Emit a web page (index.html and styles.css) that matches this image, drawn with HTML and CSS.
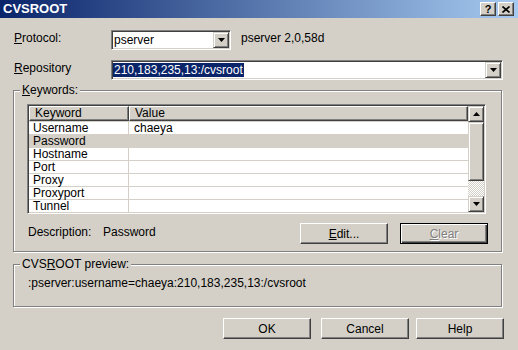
FILE: index.html
```html
<!DOCTYPE html>
<html lang="en">
<head>
  <meta charset="UTF-8">
  <title>CVSROOT</title>
  <link rel="stylesheet" href="styles.css">
</head>
<body>
  <div class="titlebar">
    <span class="title">CVSROOT</span>
    <div class="caption-btns">
      <span class="cap-btn cap-help">?</span>
      <span class="cap-btn">
        <svg width="8" height="7" viewBox="0 0 8 7"><path d="M0.5 0.5 L7.5 6.5 M7.5 0.5 L0.5 6.5" stroke="#000" stroke-width="1.6" fill="none"/></svg>
      </span>
    </div>
  </div>

  <div class="dialog">
    <div class="field-row">
      <span class="field-label"><u>P</u>rotocol:</span>
      <div class="combo combo-protocol">
        <span class="combo-text">pserver</span>
        <span class="drop-btn"><svg width="7" height="4" viewBox="0 0 7 4"><path d="M0 0 H7 L3.5 4 Z" fill="#000"/></svg></span>
      </div>
      <span class="version">pserver 2,0,58d</span>
    </div>

    <div class="field-row field-row-repo">
      <span class="field-label"><u>R</u>epository</span>
      <div class="combo combo-repo">
        <span class="combo-text"><span class="selected-text">210,183,235,13:/cvsroot</span></span>
        <span class="drop-btn"><svg width="7" height="4" viewBox="0 0 7 4"><path d="M0 0 H7 L3.5 4 Z" fill="#000"/></svg></span>
      </div>
    </div>

    <div class="group group-keywords">
      <div class="group-title"><u>K</u>eywords:</div>
      <div class="listview">
        <div class="list-main">
          <div class="list-header">
            <div class="hcell hcell-key">Keyword</div>
            <div class="hcell hcell-val">Value</div>
          </div>
          <div class="row"><div class="cell-key">Username</div><div class="cell-val">chaeya</div></div>
          <div class="row row-selected"><div class="cell-key">Password</div><div class="cell-val"></div></div>
          <div class="row"><div class="cell-key">Hostname</div><div class="cell-val"></div></div>
          <div class="row"><div class="cell-key">Port</div><div class="cell-val"></div></div>
          <div class="row"><div class="cell-key">Proxy</div><div class="cell-val"></div></div>
          <div class="row"><div class="cell-key">Proxyport</div><div class="cell-val"></div></div>
          <div class="row"><div class="cell-key">Tunnel</div><div class="cell-val"></div></div>
        </div>
        <div class="scrollbar">
          <span class="sb-btn"><svg width="7" height="4" viewBox="0 0 7 4"><path d="M0 4 H7 L3.5 0 Z" fill="#000"/></svg></span>
          <span class="sb-thumb"></span>
          <span class="sb-track"></span>
          <span class="sb-btn"><svg width="7" height="4" viewBox="0 0 7 4"><path d="M0 0 H7 L3.5 4 Z" fill="#000"/></svg></span>
        </div>
      </div>
      <div class="desc-row">
        <span class="desc-label">Description:</span>
        <span class="desc-value">Password</span>
        <button class="btn btn-edit"><u>E</u>dit...</button>
        <button class="btn btn-default btn-disabled"><u>C</u>lear</button>
      </div>
    </div>

    <div class="group group-preview">
      <div class="group-title">CVS<u>R</u>OOT preview:</div>
      <div class="preview-text">:pserver:username=chaeya:210,183,235,13:/cvsroot</div>
    </div>

    <div class="dialog-btns">
      <button class="btn">OK</button>
      <button class="btn btn-cancel">Cancel</button>
      <button class="btn btn-help">Help</button>
    </div>
  </div>
</body>
</html>
```

FILE: styles.css
```css
* {
  box-sizing: border-box;
}
body {
  margin: 0;
  width: 518px;
  height: 350px;
  overflow: hidden;
  background-color: #d4d0c8;
  font-family: "Liberation Sans", Arial, sans-serif;
  font-size: 12px;
  line-height: 14px;
  color: #000;
}
u {
  text-underline-offset: 1px;
}

/* title bar */
.titlebar {
  height: 18px;
  display: flex;
  align-items: center;
  justify-content: space-between;
  padding: 0 4px 0 3px;
  background: linear-gradient(to right, #0a246a, #a6caf0);
}
.title {
  color: #fff;
  font-weight: bold;
  font-size: 13px;
  line-height: 16px;
}
.caption-btns {
  display: flex;
  gap: 2px;
}
.cap-btn {
  width: 16px;
  height: 14px;
  display: flex;
  align-items: center;
  justify-content: center;
  background-color: #d4d0c8;
  border: 1px solid;
  border-color: #fff #404040 #404040 #fff;
  box-shadow: inset -1px -1px 0 #808080;
}
.cap-help {
  font-weight: bold;
  font-size: 11px;
  line-height: 12px;
}

/* form rows */
.dialog {
  padding: 12px 0 0 13px;
}
.field-row {
  display: flex;
  align-items: flex-start;
  height: 20px;
}
.field-row-repo {
  margin-top: 10px;
}
.field-label {
  width: 98px;
  padding: 1px 0 0 1px;
}
.version {
  margin-left: 10px;
  padding-top: 1px;
}
.combo {
  display: flex;
  height: 20px;
  padding: 1px;
  background-color: #fff;
  border: 1px solid;
  border-color: #808080 #fff #fff #808080;
  box-shadow: inset 1px 1px 0 #404040, inset -1px -1px 0 #d4d0c8;
}
.combo-protocol {
  width: 120px;
}
.combo-repo {
  width: 392px;
}
.combo-text {
  flex: 1;
  line-height: 16px;
  padding-left: 1px;
}
.combo-repo .combo-text {
  padding-left: 0;
}
.selected-text {
  display: inline-block;
  margin-top: 1px;
  padding: 0 1px;
  line-height: 14px;
  background-color: #0a246a;
  color: #fff;
}
.drop-btn,
.sb-btn {
  width: 16px;
  height: 16px;
  display: flex;
  align-items: center;
  justify-content: center;
  background-color: #d4d0c8;
  border: 1px solid;
  border-color: #d4d0c8 #404040 #404040 #d4d0c8;
  box-shadow: inset 1px 1px 0 #fff, inset -1px -1px 0 #808080;
}

/* group boxes */
.group {
  width: 489px;
  border: 1px solid #808080;
  box-shadow: 1px 1px 0 #fff, inset 1px 1px 0 #fff;
}
.group-keywords {
  margin-top: 10px;
  padding-bottom: 7px;
}
.group-preview {
  margin-top: 12px;
  padding-bottom: 16px;
}
.group-title {
  width: fit-content;
  margin: -8px 0 0 6px;
  padding: 0 2px;
  background-color: #d4d0c8;
}

/* list view */
.listview {
  display: flex;
  width: 459px;
  height: 110px;
  margin: 7px 0 0 13px;
  padding: 1px;
  background-color: #fff;
  border: 1px solid;
  border-color: #808080 #fff #fff #808080;
  box-shadow: inset 1px 1px 0 #404040, inset -1px -1px 0 #d4d0c8;
}
.list-main {
  flex: 1;
  overflow: hidden;
}
.list-header {
  display: flex;
  height: 15px;
}
.hcell {
  height: 15px;
  padding-left: 5px;
  line-height: 12px;
  background-color: #d4d0c8;
  border: 1px solid;
  border-color: #fff #404040 #404040 #fff;
  box-shadow: inset -1px -1px 0 #808080;
}
.hcell-key {
  width: 100px;
}
.hcell-val {
  flex: 1;
}
.row {
  display: flex;
  height: 13px;
  border-top: 1px solid #d4d0c8;
  line-height: 12px;
}
.row-selected {
  background-color: #d4d0c8;
}
.cell-key {
  width: 100px;
  padding-left: 4px;
  border-right: 1px solid #d4d0c8;
}
.cell-val {
  flex: 1;
  padding-left: 5px;
}
.scrollbar {
  width: 16px;
  display: flex;
  flex-direction: column;
}
.sb-thumb {
  height: 59px;
  background-color: #d4d0c8;
  border: 1px solid;
  border-color: #d4d0c8 #404040 #404040 #d4d0c8;
  box-shadow: inset 1px 1px 0 #fff, inset -1px -1px 0 #808080;
}
.sb-track {
  flex: 1;
  background: repeating-conic-gradient(#fff 0 25%, #d4d0c8 0 50%) 0 0 / 2px 2px;
}

/* description + buttons */
.desc-row {
  display: flex;
  align-items: flex-start;
  height: 21px;
  margin: 9px 13px 0 14px;
}
.desc-label {
  width: 75px;
  padding-top: 2px;
}
.desc-value {
  flex: 1;
  padding-top: 2px;
}
.btn {
  width: 88px;
  height: 21px;
  padding: 0;
  font-family: inherit;
  font-size: 12px;
  line-height: 14px;
  color: #000;
  background-color: #d4d0c8;
  border: 1px solid;
  border-color: #fff #404040 #404040 #fff;
  box-shadow: inset -1px -1px 0 #808080;
}
.btn-default {
  margin-left: 12px;
  border-color: #000;
  box-shadow: inset 1px 1px 0 #fff, inset -1px -1px 0 #404040, inset -2px -2px 0 #808080;
}
.btn-disabled {
  color: #808080;
  text-shadow: 1px 1px 0 #fff;
}
.preview-text {
  margin: 5px 0 0 14px;
}
.dialog-btns {
  display: flex;
  margin: 11px 0 0 210px;
}
.btn-cancel {
  margin-left: 10px;
}
.btn-help {
  margin-left: 7px;
}
```
